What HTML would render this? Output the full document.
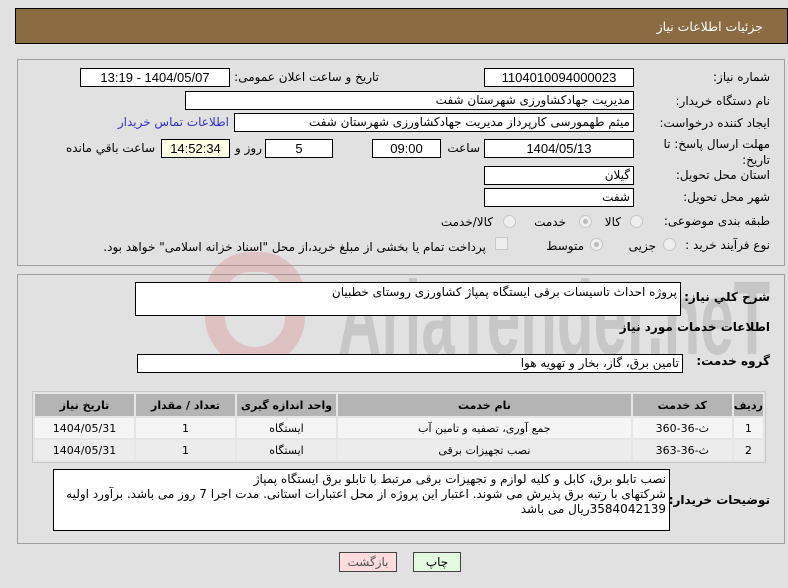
<!DOCTYPE html>
<html><head><meta charset="utf-8"><style>
*{margin:0;padding:0;box-sizing:border-box}
body{width:788px;height:588px;background:#e1e1e1;font-family:Tahoma,"DejaVu Sans","Liberation Sans",sans-serif;font-size:12px;color:#000;position:relative;overflow:hidden;direction:rtl}
.a{position:absolute;white-space:nowrap}
.hdr{left:15px;top:8px;width:773px;height:36px;background:#8b6c42;border:1px solid #000;color:#fff;font-size:12.5px}
.pan{border:1px solid #a0a0a0;background:#e1e1e1}
.bx{position:absolute;background:#fff;border:1px solid #000;height:19px;line-height:17px;text-align:center;font-size:13px;font-family:"Liberation Sans","DejaVu Sans",sans-serif}
.br{text-align:right;padding-right:3px;font-family:Tahoma,"DejaVu Sans",sans-serif;font-size:12px}
.l{position:absolute;white-space:nowrap;font-size:12px}
.rad{position:absolute;width:13px;height:13px;border-radius:50%;border:1px solid #c8c8c8;background:#eee}
.rad.on::after{content:"";position:absolute;left:3px;top:3px;width:5px;height:5px;border-radius:50%;background:#bbb}
table{position:absolute;border-collapse:separate;border-spacing:2px;background:#e6e6e6;border:1px solid #c8c8c8;font-size:11px}
th{background:#b4b4b4;height:22px;font-weight:bold;font-size:11px}
td{text-align:center;height:20px;font-size:11px}
tr.r1 td{background:#f5f5f5}tr.r2 td{background:#ececec}
.b{font-weight:bold}
.wm{position:absolute;direction:ltr;font-family:"Liberation Sans",sans-serif;font-weight:bold;color:rgba(140,140,140,0.3);font-size:100px;line-height:100px;transform:scale(0.6,1.05);transform-origin:left top}
</style></head><body>
<div class="a hdr"><span style="position:absolute;right:24px;top:10px">جزئیات اطلاعات نیاز</span></div>

<div class="a pan" style="left:17px;top:59px;width:768px;height:207px"></div>
<div class="a pan" style="left:17px;top:274px;width:768px;height:270px"></div>
<div class="wm" style="left:338px;top:266px">AriaTender.neT</div>
<div class="a" style="left:205px;top:252px;width:100px;height:115px;border:20px solid rgba(215,110,110,0.28);border-radius:45px 45px 50px 50px"></div>

<div class="l" style="right:18px;top:70px">شماره نیاز:</div>
<div class="bx" style="left:484px;top:68px;width:150px">1104010094000023</div>
<div class="l" style="right:409px;top:70px">تاریخ و ساعت اعلان عمومی:</div>
<div class="bx" style="left:80px;top:68px;width:150px">1404/05/07 - 13:19</div>
<div class="l" style="right:18px;top:94px">نام دستگاه خریدار:</div>
<div class="bx br" style="left:185px;top:91px;width:449px">مدیریت جهادکشاورزی شهرستان شفت</div>
<div class="l" style="right:18px;top:116px">ایجاد کننده درخواست:</div>
<div class="bx br" style="left:234px;top:113px;width:400px">میثم طهمورسی کارپرداز مدیریت جهادکشاورزی شهرستان شفت</div>
<div class="l" style="right:559px;top:115px;color:#3333cc">اطلاعات تماس خریدار</div>
<div class="l" style="right:18px;top:136px;line-height:16px;white-space:normal;width:120px">مهلت ارسال پاسخ: تا تاریخ:</div>
<div class="bx" style="left:484px;top:139px;width:150px">1404/05/13</div>
<div class="l" style="right:308px;top:141px">ساعت</div>
<div class="bx" style="left:372px;top:139px;width:69px">09:00</div>
<div class="bx" style="left:265px;top:139px;width:68px">5</div>
<div class="l" style="right:526px;top:141px">روز و</div>
<div class="bx" style="left:161px;top:139px;width:69px;background:#ffffe6">14:52:34</div>
<div class="l" style="right:633px;top:141px">ساعت باقي مانده</div>
<div class="l" style="right:18px;top:168px">استان محل تحویل:</div>
<div class="bx br" style="left:484px;top:166px;width:150px">گیلان</div>
<div class="l" style="right:18px;top:190px">شهر محل تحویل:</div>
<div class="bx br" style="left:484px;top:188px;width:150px">شفت</div>
<div class="l" style="right:18px;top:214px">طبقه بندی موضوعی:</div>
<div class="rad" style="left:630px;top:215px"></div><div class="l" style="right:167px;top:215px">کالا</div>
<div class="rad on" style="left:579px;top:215px"></div><div class="l" style="right:222px;top:215px">خدمت</div>
<div class="rad" style="left:503px;top:215px"></div><div class="l" style="right:295px;top:215px">کالا/خدمت</div>
<div class="l" style="right:18px;top:238px">نوع فرآیند خرید :</div>
<div class="rad" style="left:663px;top:238px"></div><div class="l" style="right:132px;top:239px">جزیی</div>
<div class="rad on" style="left:590px;top:238px"></div><div class="l" style="right:204px;top:239px">متوسط</div>
<div class="a" style="left:495px;top:237px;width:13px;height:13px;border:1px solid #c8c8c8;background:#eee"></div>
<div class="l" style="right:302px;top:240px">پرداخت تمام یا بخشی از مبلغ خرید،از محل "اسناد خزانه اسلامی" خواهد بود.</div>

<div class="l b" style="right:18px;top:290px">شرح کلي نیاز:</div>
<div class="bx br" style="left:135px;top:282px;width:546px;height:34px;line-height:18px">پروژه احداث تاسیسات برقی ایستگاه پمپاژ کشاورزی روستای خطبیان</div>
<div class="l b" style="right:18px;top:320px">اطلاعات خدمات مورد نیاز</div>
<div class="l b" style="right:18px;top:354px">گروه خدمت:</div>
<div class="bx br" style="left:137px;top:354px;width:546px">تامین برق، گاز، بخار و تهویه هوا</div>
<table style="left:32px;top:391px;width:734px">
<tr><th style="width:23px">ردیف</th><th style="width:99px">کد خدمت</th><th>نام خدمت</th><th style="width:99px">واحد اندازه گیری</th><th style="width:99px">تعداد / مقدار</th><th style="width:99px">تاریخ نیاز</th></tr>
<tr class="r1"><td>1</td><td>ث-36-360</td><td>جمع آوری، تصفیه و تامین آب</td><td>ایستگاه</td><td>1</td><td>1404/05/31</td></tr>
<tr class="r2"><td>2</td><td>ث-36-363</td><td>نصب تجهیزات برقی</td><td>ایستگاه</td><td>1</td><td>1404/05/31</td></tr>
</table>
<div class="l b" style="right:18px;top:493px">توضیحات خریدار:</div>
<div class="bx br" style="left:53px;top:469px;width:617px;height:62px;line-height:15px;white-space:nowrap;font-size:12px;padding-top:2px">نصب تابلو برق، کابل و کلیه لوازم و تجهیزات برقی مرتبط با تابلو برق ایستگاه پمپاژ<br>شرکتهای با رتبه برق پذیرش می شوند. اعتبار این پروژه از محل اعتبارات استانی. مدت اجرا 7 روز می باشد. برآورد اولیه<br>3584042139ریال می باشد</div>

<div class="a" style="left:339px;top:552px;width:58px;height:20px;background:#fcdcdc;border:1px solid #444;text-align:center;line-height:18px;color:#555">بازگشت</div>
<div class="a" style="left:413px;top:552px;width:48px;height:20px;background:#e4fae0;border:1px solid #444;text-align:center;line-height:18px">چاپ</div>
</body></html>
